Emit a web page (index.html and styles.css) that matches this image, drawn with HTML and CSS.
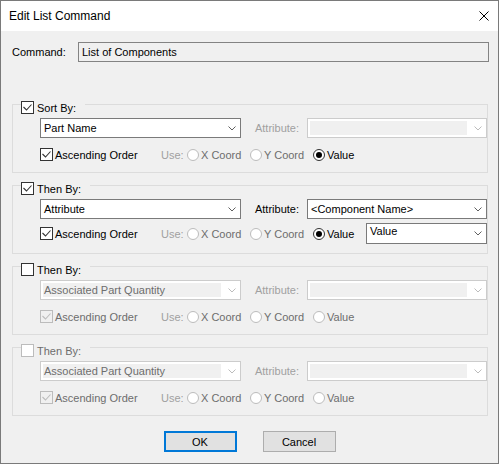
FILE: index.html
```html
<!DOCTYPE html>
<html>
<head>
<meta charset="utf-8">
<link rel="stylesheet" href="styles.css">
</head>
<body>
<div class="window">
  <div class="titlebar">
    <span class="title">Edit List Command</span>
    <svg class="close" viewBox="0 0 10 10"><path d="M0.5 0.5L9.5 9.5M9.5 0.5L0.5 9.5" stroke="#000" stroke-width="1" fill="none"/></svg>
  </div>
  <div class="content">
    <div class="cmd-row">
      <span class="cmd-label">Command:</span>
      <div class="cmd-box">List of Components</div>
    </div>

    <!-- Group 1 -->
    <div class="group first">
      <div class="group-head">
        <span class="cb"><svg viewBox="0 0 11 11"><polyline points="1.5,5 4.5,8 9.5,2.5"/></svg></span>
        <span>Sort By:</span>
      </div>
      <div class="row1">
        <div class="combo main"><span class="ctext">Part Name</span><svg class="chev" viewBox="0 0 8 5"><path d="M0.5 0.5L4 4L7.5 0.5"/></svg></div>
        <span class="attr">Attribute:</span>
        <div class="combo attrc dis"><span class="ctext fill"></span><svg class="chev" viewBox="0 0 8 5"><path d="M0.5 0.5L4 4L7.5 0.5"/></svg></div>
      </div>
      <div class="row2">
        <div class="ascend">
          <span class="cb"><svg viewBox="0 0 11 11"><polyline points="1.5,5 4.5,8 9.5,2.5"/></svg></span>
          <span>Ascending Order</span>
        </div>
        <span class="use">Use:</span>
        <div class="radio dis"><span class="rb"></span><span>X Coord</span></div>
        <div class="radio dis"><span class="rb"></span><span>Y Coord</span></div>
        <div class="radio last"><span class="rb on"></span><span>Value</span></div>
      </div>
    </div>

    <!-- Group 2 -->
    <div class="group">
      <div class="group-head">
        <span class="cb"><svg viewBox="0 0 11 11"><polyline points="1.5,5 4.5,8 9.5,2.5"/></svg></span>
        <span>Then By:</span>
      </div>
      <div class="row1">
        <div class="combo main"><span class="ctext">Attribute</span><svg class="chev" viewBox="0 0 8 5"><path d="M0.5 0.5L4 4L7.5 0.5"/></svg></div>
        <span class="attr on">Attribute:</span>
        <div class="combo attrc"><span class="ctext">&lt;Component Name&gt;</span><svg class="chev" viewBox="0 0 8 5"><path d="M0.5 0.5L4 4L7.5 0.5"/></svg></div>
      </div>
      <div class="row2 tall">
        <div class="ascend">
          <span class="cb"><svg viewBox="0 0 11 11"><polyline points="1.5,5 4.5,8 9.5,2.5"/></svg></span>
          <span>Ascending Order</span>
        </div>
        <span class="use">Use:</span>
        <div class="radio dis"><span class="rb"></span><span>X Coord</span></div>
        <div class="radio dis"><span class="rb"></span><span>Y Coord</span></div>
        <div class="radio last"><span class="rb on"></span><span>Value</span></div>
        <div class="combo valc"><span class="ctext top">Value</span><svg class="chev" viewBox="0 0 8 5"><path d="M0.5 0.5L4 4L7.5 0.5"/></svg></div>
      </div>
    </div>

    <!-- Group 3 -->
    <div class="group">
      <div class="group-head">
        <span class="cb"></span>
        <span>Then By:</span>
      </div>
      <div class="row1">
        <div class="combo main dis"><span class="ctext fill">Associated Part Quantity</span><svg class="chev" viewBox="0 0 8 5"><path d="M0.5 0.5L4 4L7.5 0.5"/></svg></div>
        <span class="attr">Attribute:</span>
        <div class="combo attrc dis"><span class="ctext fill"></span><svg class="chev" viewBox="0 0 8 5"><path d="M0.5 0.5L4 4L7.5 0.5"/></svg></div>
      </div>
      <div class="row2">
        <div class="ascend dis">
          <span class="cb dis"><svg viewBox="0 0 11 11"><polyline points="1.5,5 4.5,8 9.5,2.5"/></svg></span>
          <span>Ascending Order</span>
        </div>
        <span class="use">Use:</span>
        <div class="radio dis"><span class="rb"></span><span>X Coord</span></div>
        <div class="radio dis"><span class="rb"></span><span>Y Coord</span></div>
        <div class="radio dis last"><span class="rb"></span><span>Value</span></div>
      </div>
    </div>

    <!-- Group 4 -->
    <div class="group">
      <div class="group-head dis">
        <span class="cb dis white"></span>
        <span>Then By:</span>
      </div>
      <div class="row1">
        <div class="combo main dis"><span class="ctext fill">Associated Part Quantity</span><svg class="chev" viewBox="0 0 8 5"><path d="M0.5 0.5L4 4L7.5 0.5"/></svg></div>
        <span class="attr">Attribute:</span>
        <div class="combo attrc dis"><span class="ctext fill"></span><svg class="chev" viewBox="0 0 8 5"><path d="M0.5 0.5L4 4L7.5 0.5"/></svg></div>
      </div>
      <div class="row2">
        <div class="ascend dis">
          <span class="cb dis"><svg viewBox="0 0 11 11"><polyline points="1.5,5 4.5,8 9.5,2.5"/></svg></span>
          <span>Ascending Order</span>
        </div>
        <span class="use">Use:</span>
        <div class="radio dis"><span class="rb"></span><span>X Coord</span></div>
        <div class="radio dis"><span class="rb"></span><span>Y Coord</span></div>
        <div class="radio dis last"><span class="rb"></span><span>Value</span></div>
      </div>
    </div>

    <div class="buttons">
      <div class="btn default">OK</div>
      <div class="btn">Cancel</div>
    </div>
  </div>
</div>
</body>
</html>
```
FILE: styles.css
```css
* { box-sizing: border-box; }

body {
  margin: 0;
  font-family: "Liberation Sans", Arial, sans-serif;
  font-size: 11px;
  color: #000;
}

.window {
  width: 499px;
  height: 464px;
  border: 1px solid #7a7a7a;
  background: #f0f0f0;
  display: flex;
  flex-direction: column;
}

.titlebar {
  height: 30px;
  flex-shrink: 0;
  background: #fff;
  display: flex;
  align-items: center;
  padding: 0 9px 0 8px;
}

.title {
  flex: 1;
  font-size: 12px;
}

.close {
  width: 10px;
  height: 10px;
}

.content {
  padding-top: 11px;
}

.cmd-row {
  display: flex;
  align-items: center;
  height: 20px;
  margin-left: 11px;
}

.cmd-label {
  width: 66px;
}

.cmd-box {
  width: 411px;
  height: 20px;
  border: 1px solid #838383;
  padding-left: 3px;
  display: flex;
  align-items: center;
}

.group {
  width: 476px;
  height: 69px;
  margin: 12px 0 0 11px;
  border: 1px solid #dcdcdc;
}

.group.first {
  margin-top: 42px;
}

.group-head {
  display: flex;
  align-items: center;
  width: max-content;
  height: 13px;
  margin: -4px 0 0 8px;
  padding-right: 9px;
  gap: 3px;
  background: #f0f0f0;
}

.group-head.dis { color: #6d6d6d; }

.cb {
  width: 13px;
  height: 13px;
  flex-shrink: 0;
  border: 1px solid #333;
  background: #fff;
  display: flex;
}

.cb svg {
  width: 11px;
  height: 11px;
}

.cb polyline {
  fill: none;
  stroke: #333;
  stroke-width: 1.1;
}

.cb.dis {
  border-color: #bcbcbc;
  background: #f0f0f0;
}

.cb.dis.white { background: #fff; }

.cb.dis polyline { stroke: #bcbcbc; }

.row1 {
  display: flex;
  align-items: center;
  height: 20px;
  margin: 4px 0 0 27px;
}

.combo {
  height: 20px;
  border: 1px solid #7a7a7a;
  background: #fff;
  display: flex;
  align-items: center;
  padding-left: 2px;
  flex-shrink: 0;
}

.combo.main { width: 201px; }
.combo.attrc { width: 180px; }
.combo.valc {
  width: 121px;
  height: 21px;
  margin-left: auto;
  align-items: flex-start;
}

.ctext {
  flex: 1;
  padding-left: 1px;
  white-space: nowrap;
  overflow: hidden;
}

.ctext.top { padding-top: 1px; }

.combo.dis {
  border-color: #cccccc;
  color: #6d6d6d;
  padding: 2px 0 2px 2px;
  align-items: stretch;
}

.ctext.fill {
  background: #f0f0f0;
  display: flex;
  align-items: center;
  margin-right: 3px;
}

.chev {
  width: 8px;
  height: 5px;
  margin: 0 4px 0 4px;
  flex-shrink: 0;
  align-self: center;
}

.chev path {
  fill: none;
  stroke: #606060;
  stroke-width: 1;
}

.combo.dis .chev path { stroke: #bcbcbc; }

.attr {
  flex: 1;
  text-align: right;
  padding-right: 8px;
  color: #a0a0a0;
}

.attr.on { color: #000; }

.row2 {
  display: flex;
  align-items: center;
  height: 13px;
  margin: 10px 0 0 27px;
  width: 447px;
}

.row2.tall {
  height: 21px;
  margin-top: 4px;
}

.ascend {
  width: 121px;
  display: flex;
  align-items: center;
  gap: 2px;
  flex-shrink: 0;
}

.ascend.dis { color: #6d6d6d; }

.use {
  width: 26px;
  color: #a0a0a0;
  flex-shrink: 0;
}

.radio {
  width: 63px;
  display: flex;
  align-items: center;
  gap: 2px;
  flex-shrink: 0;
}

.radio.last { width: auto; }

.radio.dis { color: #6d6d6d; }

.rb {
  width: 12px;
  height: 12px;
  border-radius: 50%;
  border: 1px solid #bcbcbc;
  background: #fff;
  flex-shrink: 0;
  display: flex;
  align-items: center;
  justify-content: center;
}

.rb.on { border-color: #333; }

.rb.on::after {
  content: "";
  width: 6px;
  height: 6px;
  border-radius: 50%;
  background: #000;
}

.buttons {
  display: flex;
  justify-content: center;
  gap: 26px;
  margin-top: 15px;
}

.btn {
  width: 73px;
  height: 21px;
  border: 1px solid #adadad;
  background: #e1e1e1;
  display: flex;
  align-items: center;
  justify-content: center;
}

.btn.default {
  border: 2px solid #0078d7;
}
```
